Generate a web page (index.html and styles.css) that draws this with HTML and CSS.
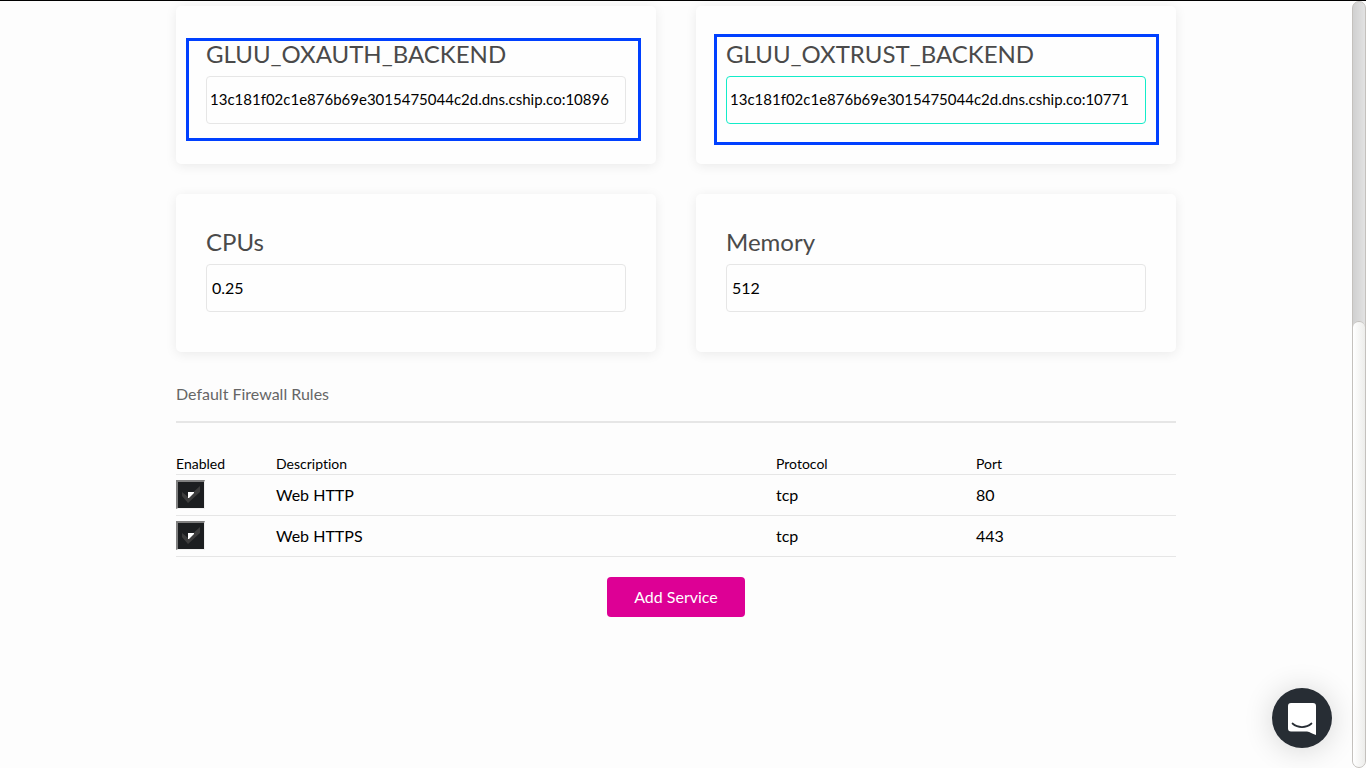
FILE: index.html
```html
<!DOCTYPE html>
<html lang="en">
<head>
<meta charset="utf-8">
<meta name="viewport" content="width=device-width, initial-scale=1">
<title>Add Service</title>
<link rel="stylesheet" href="styles.css">
</head>
<body>
<div class="page">
  <main class="content">
    <form class="service-form">
      <div class="cards">
        <section class="card">
          <label class="card-label" for="oxauth">GLUU_OXAUTH_BACKEND</label>
          <input class="field field-long" id="oxauth" type="text" value="13c181f02c1e876b69e3015475044c2d.dns.cship.co:10896">
          <div class="highlight highlight-oxauth"></div>
        </section>
        <section class="card">
          <label class="card-label" for="oxtrust">GLUU_OXTRUST_BACKEND</label>
          <input class="field field-long field-active" id="oxtrust" type="text" value="13c181f02c1e876b69e3015475044c2d.dns.cship.co:10771">
          <div class="highlight highlight-oxtrust"></div>
        </section>
        <section class="card">
          <label class="card-label" for="cpus">CPUs</label>
          <input class="field" id="cpus" type="text" value="0.25">
        </section>
        <section class="card">
          <label class="card-label" for="memory">Memory</label>
          <input class="field" id="memory" type="text" value="512">
        </section>
      </div>

      <h2 class="section-title">Default Firewall Rules</h2>

      <table class="rules">
        <thead>
          <tr><th class="col-enabled" scope="col">Enabled</th><th class="col-description" scope="col">Description</th><th class="col-protocol" scope="col">Protocol</th><th scope="col">Port</th></tr>
        </thead>
        <tbody>
          <tr>
            <td><label class="check"><input class="check-box" type="checkbox" aria-label="Enable Web HTTP" checked><svg class="check-mark" viewBox="0 0 29 29" aria-hidden="true"><path d="M6 12v4l6 7L24 12V6L12 17z" fill="#3d3d3d"/><path d="M12 12h6v1l-5 5h-1z" fill="#fff"/></svg></label></td>
            <td>Web HTTP</td><td>tcp</td><td>80</td>
          </tr>
          <tr>
            <td><label class="check"><input class="check-box" type="checkbox" aria-label="Enable Web HTTPS" checked><svg class="check-mark" viewBox="0 0 29 29" aria-hidden="true"><path d="M6 12v4l6 7L24 12V6L12 17z" fill="#3d3d3d"/><path d="M12 12h6v1l-5 5h-1z" fill="#fff"/></svg></label></td>
            <td>Web HTTPS</td><td>tcp</td><td>443</td>
          </tr>
        </tbody>
      </table>

      <div class="actions"><button class="submit" type="button">Add Service</button></div>
    </form>
  </main>
  <div class="scrollbar" aria-hidden="true"><div class="scrollbar-thumb"></div></div>
</div>
<button class="chat" type="button" aria-label="Open chat">
  <svg class="chat-icon" viewBox="0 0 28 32" aria-hidden="true"><path d="M3 0h22a3 3 0 0 1 3 3v29c-4-1-6-3-9-3.500H3a3 3 0 0 1-3-3V3a3 3 0 0 1 3-3z" fill="#fff"/><path d="M4.500 20.500c5.500 4.700 13.500 4.700 19 0" fill="none" stroke="#272d34" stroke-width="1.700" stroke-linecap="round"/></svg>
</button>
</body>
</html>
```
FILE: styles.css
```css
* {
  box-sizing: border-box;
}

body {
  margin: 0;
  background: #fdfdfd;
  color: #000;
  font-family: Lato, "Liberation Sans", sans-serif;
  font-size: 16px;
  font-variant-ligatures: none;
  line-height: 20px;
}

.page {
  display: flex;
  min-height: 100vh;
  border-top: 1px solid #000;
}

.content {
  flex: 1;
  min-width: 0;
  padding: 5px 20px 0;
}

.service-form {
  max-width: 1000px;
  margin: 0 auto;
}

.cards {
  display: grid;
  grid-template-columns: repeat(2, minmax(0, 1fr));
  gap: 30px 40px;
}

.card {
  position: relative;
  padding: 30px 30px 40px;
  border-radius: 5px;
  background: #fefefe;
  box-shadow: 0 2px 12px rgba(0, 0, 0, 0.08);
}

.card-label {
  display: block;
  padding-bottom: 4px;
  color: #4a4a4a;
  font-size: 24px;
  line-height: 36px;
}

.field {
  display: block;
  width: 100%;
  height: 48px;
  padding: 0 5px 2px;
  border: 1px solid #e6e6e6;
  border-radius: 4px;
  background: transparent;
  color: #000;
  font: inherit;
  outline: none;
}

.field-long {
  padding: 0 3px 2px;
  font-size: 15px;
}

.field-active {
  border-color: #13ecc9;
}

.highlight {
  position: absolute;
  border: 3px solid #0040ff;
  pointer-events: none;
}

.highlight-oxauth {
  inset: 32px 15px 23px 10px;
}

.highlight-oxtrust {
  inset: 28px 17px 19px 18px;
}

.section-title {
  margin: 32px 0 30px;
  padding-bottom: 17px;
  border-bottom: 2px solid #e6e6e6;
  color: #666;
  font-size: 16px;
  font-weight: 400;
}

.rules {
  width: 100%;
  border-collapse: separate;
  border-spacing: 0;
  table-layout: fixed;
}

.rules th,
.rules td {
  padding: 0;
  border-bottom: 1px solid #e6e6e6;
  text-align: left;
  font-weight: 400;
}

.rules th {
  height: 22px;
  font-size: 14px;
}

.rules td {
  height: 41px;
}

.col-enabled {
  width: 10%;
}

.col-description {
  width: 50%;
}

.col-protocol {
  width: 20%;
}

.check {
  display: grid;
  width: 29px;
  height: 29px;
  margin-bottom: 2px;
}

.check-box,
.check-mark {
  grid-area: 1 / 1;
  width: 29px;
  height: 29px;
  margin: 0;
}

.check-box {
  appearance: none;
  border: 2px solid;
  border-color: #808080 #f0f0f0 #f0f0f0 #808080;
  border-right-width: 1px;
  border-bottom-width: 1px;
  background: #1c1e20;
}

.check-mark {
  z-index: 1;
  pointer-events: none;
}

.actions {
  display: flex;
  justify-content: center;
  padding: 20px 0;
}

.submit {
  height: 40px;
  padding: 0 27px;
  border: 0;
  border-radius: 4px;
  background: #dd0095;
  color: #fff;
  font: inherit;
}

.scrollbar {
  display: flex;
  flex-direction: column;
  justify-content: flex-end;
  width: 14px;
  border: 1px solid #c4c1bd;
  border-radius: 7px;
  background: linear-gradient(to right, #d0d0d0, #e2e2e2);
}

.scrollbar-thumb {
  flex: 0 0 58.3%;
  border: 1px solid #c4c1bd;
  border-width: 1px 0 0;
  border-radius: 6px;
  background: linear-gradient(to right, #fff, #ededeb);
}

.chat {
  position: fixed;
  right: 34px;
  bottom: 20px;
  display: grid;
  place-items: center;
  width: 60px;
  height: 60px;
  padding: 2px 0 0;
  border: 0;
  border-radius: 50%;
  background: #272d34;
  box-shadow: 0 2px 30px rgba(0, 0, 0, 0.16);
}

.chat-icon {
  width: 28px;
  height: 32px;
}
```
